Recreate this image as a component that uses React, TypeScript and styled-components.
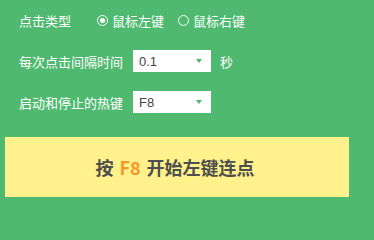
import React from 'react';
import styled, { createGlobalStyle } from 'styled-components';

const GlobalStyle = createGlobalStyle`
  html, body {
    margin: 0;
    padding: 0;
    background: #4fb96f;
  }
  body {
    font-family: 'Noto Sans CJK SC', 'Noto Sans', sans-serif;
  }
`;

const Panel = styled.div`
  width: 374px;
  height: 214px;
  background: #4fb96f;
  box-sizing: border-box;
  padding: 9px 0 0 0;
  display: flex;
  flex-direction: column;
`;

const Form = styled.div`
  display: flex;
  flex-direction: column;
  gap: 19px;
  padding-left: 19px;
`;

const Row = styled.div`
  display: flex;
  align-items: center;
  height: 22px;
`;

const Label = styled.span<{ $gap: number }>`
  color: #fff;
  font-size: 13px;
  margin-right: ${(p) => p.$gap}px;
  white-space: nowrap;
`;

const RadioItem = styled.label`
  display: flex;
  align-items: center;
  color: #fff;
  font-size: 13px;
  margin-right: 14px;
`;

const Circle = styled.span<{ $checked?: boolean }>`
  width: 11px;
  height: 11px;
  box-sizing: border-box;
  border: 1.5px solid #fff;
  border-radius: 50%;
  margin-right: 4px;
  display: flex;
  align-items: center;
  justify-content: center;

  &::after {
    content: '';
    display: ${(p) => (p.$checked ? 'block' : 'none')};
    width: 5px;
    height: 5px;
    border-radius: 50%;
    background: #fff;
  }
`;

const Select = styled.div`
  width: 78px;
  height: 22px;
  background: #fff;
  box-sizing: border-box;
  padding: 0 9px 0 6px;
  display: flex;
  align-items: center;
  justify-content: space-between;
  color: #444;
  font-size: 13px;
  font-family: 'Liberation Sans', Arial, sans-serif;
`;

const Arrow = styled.span`
  width: 0;
  height: 0;
  border-left: 3px solid transparent;
  border-right: 3px solid transparent;
  border-top: 4px solid #4fb96f;
`;

const Unit = styled.span`
  color: #fff;
  font-size: 13px;
  margin-left: 9px;
`;

const StartButton = styled.button`
  margin: 24px 0 0 5px;
  width: 344px;
  height: 60px;
  border: none;
  background: #fff18b;
  display: flex;
  align-items: center;
  justify-content: center;
  gap: 6px;
  font-family: 'Noto Sans CJK SC', 'Noto Sans', sans-serif;
  font-size: 18px;
  font-weight: bold;
  color: #4e4e4e;
  padding: 0 4px 0 0;
`;

const Key = styled.span`
  color: #f7972a;
`;

const App = () => (
  <>
    <GlobalStyle />
    <Panel>
      <Form>
        <Row>
          <Label $gap={26}>点击类型</Label>
          <RadioItem>
            <Circle $checked />
            鼠标左键
          </RadioItem>
          <RadioItem>
            <Circle />
            鼠标右键
          </RadioItem>
        </Row>
        <Row>
          <Label $gap={10}>每次点击间隔时间</Label>
          <Select>
            0.1
            <Arrow />
          </Select>
          <Unit>秒</Unit>
        </Row>
        <Row>
          <Label $gap={10}>启动和停止的热键</Label>
          <Select>
            F8
            <Arrow />
          </Select>
        </Row>
      </Form>
      <StartButton>
        <span>按</span>
        <Key>F8</Key>
        <span>开始左键连点</span>
      </StartButton>
    </Panel>
  </>
);

export default App;
